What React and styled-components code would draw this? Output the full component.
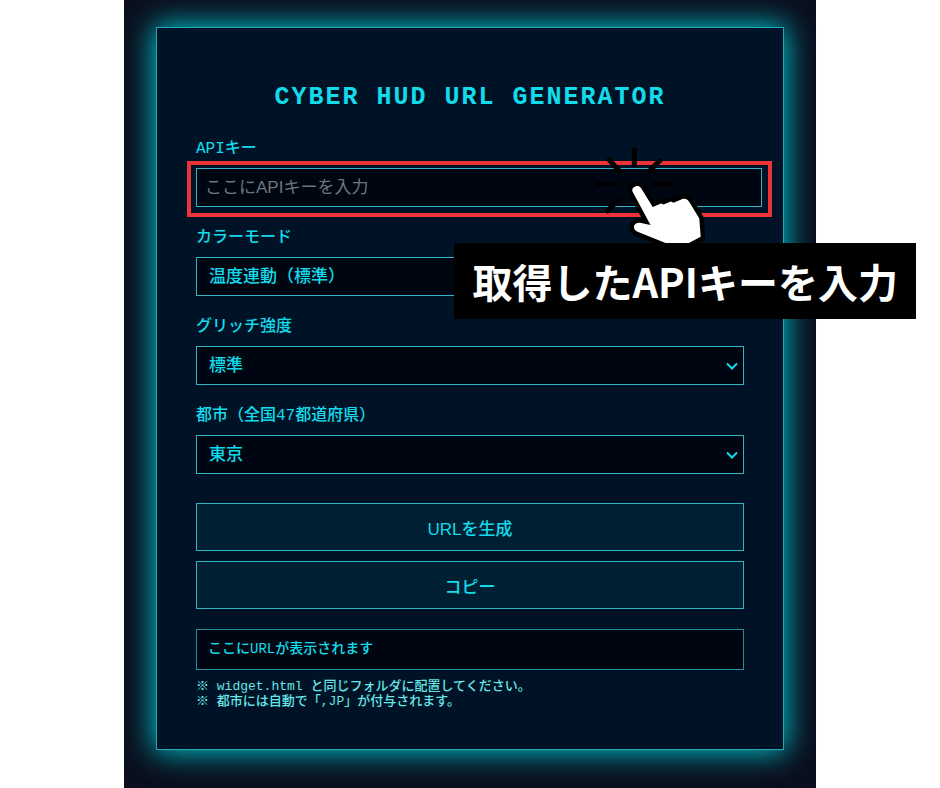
import React, { useState } from "react";
import styled, { createGlobalStyle } from "styled-components";

const mono = `"Courier New", "Liberation Mono", "Noto Sans CJK JP", monospace`;
const sans = `"Liberation Sans", "Noto Sans CJK JP", sans-serif`;

const GlobalStyle = createGlobalStyle`
  * {
    box-sizing: border-box;
  }

  body {
    margin: 0;
    background: #ffffff;
  }
`;

const Stage = styled.main`
  max-width: 692px;
  min-height: 100vh;
  margin: 0 auto;
  padding: 27px 32px 38px;
  background: #0a0e1d;
  font-family: ${mono};
  color: #12dcec;
`;

const Panel = styled.form`
  padding: 56px 39px 40px;
  background: #001326;
  border: 1px solid #22a9b8;
  box-shadow: 0 0 28px 2px #00c8d2;
`;

const Title = styled.h1`
  margin: 0 0 27px;
  font-size: 25px;
  line-height: 28px;
  font-weight: bold;
  letter-spacing: 2px;
  text-align: center;
  text-transform: uppercase;
`;

const Fields = styled.div`
  display: flex;
  flex-direction: column;
  gap: 21px;
`;

const Field = styled.div`
  display: flex;
  flex-direction: column;
  gap: 9px;
`;

const Label = styled.label`
  font-size: 16px;
  line-height: 20px;
  font-weight: 500;
`;

const TextInput = styled.input`
  display: block;
  width: 100%;
  height: 39px;
  padding: 0 8px;
  border: 1px solid #30b4bf;
  border-radius: 0;
  background: #000611;
  color: #12dcec;
  font-family: ${sans};
  font-size: 17px;
  outline: none;

  &::placeholder {
    color: #70757a;
  }
`;

const SelectBox = styled.div`
  display: grid;
  align-items: center;

  > * {
    grid-area: 1 / 1;
  }

  svg {
    justify-self: end;
    margin-right: 5px;
    pointer-events: none;
  }
`;

const SelectInput = styled.select`
  appearance: none;
  width: 100%;
  height: 39px;
  padding: 0 12px;
  border: 1px solid #30b4bf;
  border-radius: 0;
  background: #000611;
  color: #12dcec;
  font-family: ${sans};
  font-size: 17px;
  font-weight: 500;
`;

/* 入力欄は他の項目より少し右に広い */
const Highlight = styled.div`
  position: relative;
  margin-right: -18px;

  &::after {
    content: "";
    position: absolute;
    inset: -7px -10px -10px -9px;
    border: 4px solid #ee3338;
    pointer-events: none;
  }
`;

const Pointer = styled.svg`
  position: absolute;
  z-index: 1;
  top: -23px;
  right: 52px;
  width: 120px;
  height: 100px;
  pointer-events: none;
`;

const Callout = styled.div`
  position: absolute;
  z-index: 2;
  top: 75px;
  right: -154px;
  padding: 8px 18px;
  background: #000000;
  color: #ffffff;
  font-family: "Noto Sans CJK JP", sans-serif;
  font-size: 40px;
  line-height: 60px;
  font-weight: bold;
  white-space: nowrap;
`;

const Actions = styled.div`
  display: flex;
  flex-direction: column;
  gap: 10px;
  margin: 29px 0 20px;
`;

const Button = styled.button`
  height: 48px;
  border: 1px solid #30b4bf;
  background: #001f32;
  color: #12dcec;
  font-family: ${sans};
  font-size: 17px;
  font-weight: 500;
  cursor: pointer;

  &:hover {
    background: #003048;
  }
`;

const Output = styled.output`
  display: block;
  min-height: 41px;
  padding: 8px 11px;
  border: 1px solid #218f9c;
  background: #000611;
  font-size: 14px;
  line-height: 22px;
  font-weight: 500;
  word-break: break-all;
`;

const Notes = styled.p`
  margin: 9px 0 0;
  color: #66e6e8;
  font-size: 13px;
  line-height: 15px;
  font-weight: 500;
`;

const Select = ({ id, value, onChange, children }) => (
  <SelectBox>
    <SelectInput id={id} value={value} onChange={(e) => onChange(e.target.value)}>
      {children}
    </SelectInput>
    <svg width="14" height="10" viewBox="0 0 14 10" aria-hidden="true">
      <path d="M2 2.5L7 7.5L12 2.5" fill="none" stroke="#12dcec" strokeWidth="2" />
    </svg>
  </SelectBox>
);

const App = () => {
  const [apiKey, setApiKey] = useState("");
  const [mode, setMode] = useState("temp");
  const [glitch, setGlitch] = useState("normal");
  const [city, setCity] = useState("Tokyo");
  const [url, setUrl] = useState("");

  const generate = () => {
    const params = new URLSearchParams({ key: apiKey, mode, glitch, city: `${city},JP` });
    setUrl(`widget.html?${params}`);
  };

  return (
    <>
      <GlobalStyle />
      <Stage>
        <Panel onSubmit={(e) => e.preventDefault()}>
          <Title>Cyber HUD URL Generator</Title>

          <Fields>
            <Field>
              <Label htmlFor="apiKey">APIキー</Label>
              <Highlight>
                <TextInput
                  id="apiKey"
                  type="text"
                  placeholder="ここにAPIキーを入力"
                  value={apiKey}
                  onChange={(e) => setApiKey(e.target.value)}
                />
                {/* クリックする手 */}
                <Pointer viewBox="0 0 120 100" aria-hidden="true">
                  <path
                    d="M44.3 2.5V21.5M17.7 13.3L31 27.7M71 14.3L57.3 28.3M6 39H26.7M62.3 39H82.7M30.7 52.7L16 67.3"
                    stroke="#000"
                    strokeWidth="5"
                    fill="none"
                  />
                  <path
                    d="M42.5 46.5C40.8 42 48.5 38.5 51 43L62.7 62L71 58.5L73.5 59.5L81 56.5L83.5 57.8L93 53.8Q97 53 99 56.5L109.3 73.5L110.7 91.7L97 99L78 99L47 86.5C41.5 83.5 44 77 50 77.8L60.5 80Z"
                    fill="#fff"
                    stroke="#000"
                    strokeWidth="9"
                    strokeLinejoin="round"
                    paintOrder="stroke"
                  />
                </Pointer>
                <Callout>取得したAPIキーを入力</Callout>
              </Highlight>
            </Field>

            <Field>
              <Label htmlFor="mode">カラーモード</Label>
              <Select id="mode" value={mode} onChange={setMode}>
                <option value="temp">温度連動（標準）</option>
              </Select>
            </Field>

            <Field>
              <Label htmlFor="glitch">グリッチ強度</Label>
              <Select id="glitch" value={glitch} onChange={setGlitch}>
                <option value="normal">標準</option>
              </Select>
            </Field>

            <Field>
              <Label htmlFor="city">都市（全国47都道府県）</Label>
              <Select id="city" value={city} onChange={setCity}>
                <option value="Tokyo">東京</option>
              </Select>
            </Field>
          </Fields>

          <Actions>
            <Button type="button" onClick={generate}>URLを生成</Button>
            <Button type="button" onClick={() => navigator.clipboard.writeText(url)}>コピー</Button>
          </Actions>

          <Output htmlFor="apiKey mode glitch city">{url || "ここにURLが表示されます"}</Output>
          <Notes>
            ※ widget.html と同じフォルダに配置してください。
            <br />
            ※ 都市には自動で「,JP」が付与されます。
          </Notes>
        </Panel>
      </Stage>
    </>
  );
};

export default App;
